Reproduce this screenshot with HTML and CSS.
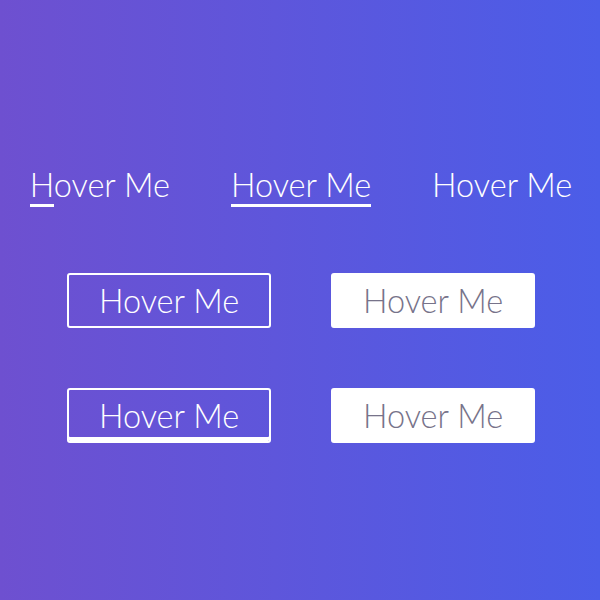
FILE: index.html
```html
<!DOCTYPE html>
<html>
<head>
<meta charset="utf-8">
<link rel="stylesheet" href="styles.css">
</head>
<body>
<main class="stage">
  <div class="links">
    <a class="link link-partial">Hover Me</a>
    <a class="link link-full">Hover Me</a>
    <a class="link">Hover Me</a>
  </div>
  <div class="btn-row">
    <a class="btn btn-outline">Hover Me</a>
    <a class="btn btn-solid">Hover Me</a>
  </div>
  <div class="btn-row">
    <a class="btn btn-outline btn-fill">Hover Me</a>
    <a class="btn btn-solid">Hover Me</a>
  </div>
</main>
</body>
</html>
```
FILE: styles.css
```css
html, body {
  margin: 0;
  padding: 0;
}
body {
  width: 600px;
  height: 600px;
  background: linear-gradient(90deg, #6e50d0 0%, #4b5de8 100%);
  font-family: "Lato", "Open Sans", sans-serif;
  font-weight: 300;
  color: #ffffff;
}
.stage {
  height: 600px;
  display: flex;
  flex-direction: column;
  align-items: center;
  padding-top: 165px;
  padding-left: 2px;
  box-sizing: border-box;
}
.links {
  display: flex;
  gap: 61px;
  margin-bottom: 66px;
}
.link {
  position: relative;
  font-size: 32.5px;
  line-height: 40px;
  padding-bottom: 2px;
  white-space: nowrap;
}
.link::after {
  content: "";
  position: absolute;
  left: 0;
  bottom: 0;
  height: 3px;
  width: 0;
  background: #ffffff;
}
.link-partial::after { width: 24px; }
.link-full::after { width: 100%; }
.btn-row {
  display: flex;
  gap: 60px;
  margin-bottom: 60px;
}
.btn {
  width: 204px;
  height: 55px;
  box-sizing: border-box;
  border: 2px solid #ffffff;
  border-radius: 3px;
  display: flex;
  align-items: center;
  justify-content: center;
  padding-bottom: 1px;
  font-size: 32.5px;
  white-space: nowrap;
}
.btn-solid {
  background: #ffffff;
  color: #77738a;
}
.btn-fill {
  box-shadow: inset 0 -4px 0 #ffffff;
}
```
